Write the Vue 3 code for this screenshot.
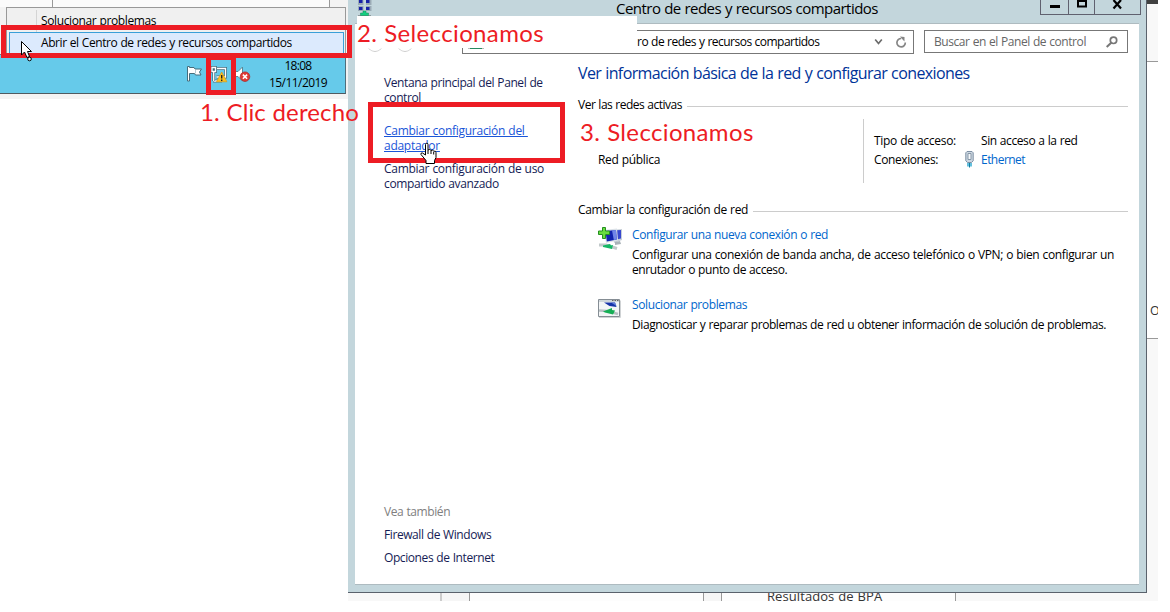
<script setup>
const seeAlso = ['Firewall de Windows', 'Opciones de Internet']
</script>

<template>
  <div class="stage">
    <!-- Windows behind the control panel -->
    <div class="behind-right">
      <div class="strip dark"></div>
      <div class="strip head"></div>
      <div class="strip body"><span>O</span></div>
      <div class="strip foot"></div>
    </div>
    <div class="behind-bottom">
      <div class="col c1"></div>
      <div class="col c2"></div>
      <div class="col c3"></div>
      <div class="col c4"></div>
      <div class="col c5"><span>Resultados de BPA</span></div>
      <div class="col c6"></div>
    </div>

    <!-- Taskbar with the network context menu -->
    <section class="tray-shot">
      <div class="tray-top"><i></i><i></i></div>
      <div class="taskbar">
        <svg class="ic-flag" width="18" height="18" viewBox="0 0 18 18">
          <path d="M1.500 1.500h2v1h4.500l1 1.500h6.500l-2 3 1.500 3h-5.500l-1-1.500H3.500v7.500h-2z" fill="#fff" stroke="#456d7c" stroke-linejoin="round" />
          <path d="M9.500 5v3.500" stroke="#b9ccd3" />
        </svg>
        <svg class="ic-net" width="18" height="18" viewBox="0 0 18 18">
          <path d="M7 3.500h8.500v8.500H6.500" fill="none" stroke="#456d7c" stroke-width="2.800" />
          <path d="M3 16h9" fill="none" stroke="#456d7c" stroke-width="2.800" />
          <path d="M7 3.500h8.500v8.500H6.500M3.500 16h8" fill="none" stroke="#fff" stroke-width="1.300" />
          <path d="M2 2.500h3.500v4H2zM3.700 7v9" fill="#456d7c" stroke="#456d7c" stroke-width="2.800" />
          <path d="M2 2.500h3.500v4H2zM3.700 7v9" fill="none" stroke="#fff" stroke-width="1.300" />
          <path d="M11.700 7l5.200 9.800H6.500z" fill="#fcc11e" stroke="#e09a10" stroke-width=".7" />
          <path d="M11.700 10v3.500M11.700 14.500v1.400" stroke="#222" stroke-width="1.400" />
        </svg>
        <svg class="ic-vol" width="17" height="18" viewBox="0 0 17 18">
          <path d="M1 6.500h3l4.500-4.500v14l-4.500-4.500h-3z" fill="#fff" stroke="#5a8796" />
          <circle cx="11" cy="11.700" r="4.800" fill="#e03a34" stroke="#a82a28" stroke-width=".7" />
          <path d="M8.900 9.600l4.200 4.200M13.100 9.600l-4.200 4.200" stroke="#fff" stroke-width="1.600" />
        </svg>
        <div class="clock"><span class="time">18:08</span><span class="date">15/11/2019</span></div>
      </div>
      <div class="menu">
        <div class="menu-item plain">Solucionar problemas</div>
        <div class="menu-item hot">Abrir el Centro de redes y recursos compartidos</div>
      </div>
    </section>

    <!-- Control panel window -->
    <section class="window">
      <header class="titlebar">
        <svg class="win-icon" width="14" height="16" viewBox="0 0 14 16">
          <g fill="#9babb6"><path d="M0 0h5.500v5H0zM8 0h5.500v5H8zM0 6h5.500v5H0zM8 6h5.500v5H8z" /></g>
          <g fill="#1822a8"><path d="M1 0h3.500v3H1zM8 0h3.500v3H8zM1 7h3.500v3H1zM8 7h3.500v3H8z" /></g>
          <path d="M0 15.500h13" stroke="#8c999c" />
          <path d="M5 11h3v2h2.500v2.500h-8V13H5z" fill="#14cf80" stroke="#168a5a" stroke-width=".5" />
        </svg>
        <h1>Centro de redes y recursos compartidos</h1>
        <div class="win-buttons">
          <button class="min"><svg width="27" height="14"><path d="M9 6.500h10" stroke="#000" stroke-width="3" /></svg></button>
          <button class="max"><svg width="25" height="14"><path d="M9 0v6.500h8V0M9 1h8" fill="none" stroke="#000" stroke-width="2" /></svg></button>
          <button class="close"><svg width="45" height="14"><path d="M18.500 0l7.500 8.500M26 0l-7.500 8.500" stroke="#000" stroke-width="2.200" /></svg></button>
        </div>
      </header>

      <div class="client">
        <div class="toolbar">
          <div class="nav"><i></i><i></i></div>
          <div class="address">
            <span class="crumb-icon"></span>
            <span class="crumb">ro de redes y recursos compartidos</span>
            <svg class="chev" width="9" height="8" viewBox="0 0 9 8"><path d="M1.200 1.500l3.300 4 3.300-4" fill="none" stroke="#6b6b6b" stroke-width="1.700" /></svg>
            <svg class="reload" width="12" height="13" viewBox="0 0 12 13"><path d="M10.300 6.500a4.200 4.200 0 1 1-4-4" fill="none" stroke="#858585" stroke-width="1.700" /><path d="M5 .5l4.500.5v4.500L8 4z" fill="#858585" /></svg>
          </div>
          <div class="search">
            <span>Buscar en el Panel de control</span>
            <svg width="12" height="12" viewBox="0 0 12 12"><circle cx="7.500" cy="4.300" r="3.200" fill="none" stroke="#777" stroke-width="1.700" /><path d="M5.200 6.700L.7 11" stroke="#777" stroke-width="2" /></svg>
          </div>
        </div>

        <div class="columns">
          <aside>
            <nav class="tasks">
              <a class="t1">Ventana principal del Panel de<br>control</a>
              <a class="t2">Cambiar configuración del&nbsp;<br>adaptador</a>
              <a class="t3">Cambiar configuración de uso<br><span>compartido avanzado</span></a>
            </nav>
            <div class="see-also">
              <p>Vea también</p>
              <a v-for="s in seeAlso" :key="s">{{ s }}</a>
            </div>
          </aside>

          <main>
            <h2>Ver información básica de la red y configurar conexiones</h2>
            <div class="legend active"><span>Ver las redes activas</span><hr></div>
            <div class="network">
              <div class="net-name">Red pública</div>
              <div class="net-info">
                <span class="k1">Tipo de acceso:</span><span class="v1">Sin acceso a la red</span>
                <span class="k2">Conexiones:</span>
                <span class="eth">
                  <svg width="9" height="17" viewBox="0 0 9 17">
                    <path d="M.8 1.800l1.200-1.300h5l1.200 1.300v8L6.500 11.500h-4L.8 9.800z" fill="#ccd7e1" stroke="#7e90a4" />
                    <path d="M3 2.500h3v6H3z" fill="#f5f8fa" stroke="#8797a8" />
                    <path d="M3 12v3.500M6 12v3.500" stroke="#22a5cf" stroke-width="1.400" /><path d="M4.500 12v4.500" stroke="#127ba0" />
                  </svg>
                  <a>Ethernet</a>
                </span>
              </div>
            </div>
            <div class="legend change"><span>Cambiar la configuración de red</span><hr></div>
            <article class="new-conn">
              <svg width="26" height="26" viewBox="0 0 26 26">
                <path d="M14 4l10-1v11l-8 3z" fill="#c7cfd8" />
                <path d="M15 4.500l8-.5v8.500l-7 1.500z" fill="#3848cf" />
                <path d="M6 4l13-1.500 1 12L8 17z" fill="#dce2e8" />
                <path d="M7.500 5l10.500-1 .8 9.500-10 2z" fill="#1224ae" />
                <path d="M14 4.300l4-.3.800 9.500-3 .6z" fill="#7186e8" />
                <path d="M17 16l5-1 1 3-6 1z" fill="#a9b2b8" />
                <path d="M1 19l7 0 11 3.500" fill="none" stroke="#c0c8c9" stroke-width="3" />
                <path d="M5 19.500l7-1.500 1 1.500 2-.5-1 4-9-2z" fill="#16b766" />
                <path d="M4.500 1.500h3v3.500h4v3.500h-4v4h-3v-4h-4V5h4z" fill="#68dc3e" stroke="#248f21" />
              </svg>
              <div>
                <a class="l1">Configurar una nueva conexión o red</a>
                <p><span class="d1">Configurar una conexión de banda ancha, de acceso telefónico o VPN; o bien configurar un</span><br>enrutador o punto de acceso.</p>
              </div>
            </article>
            <article class="fix">
              <svg width="26" height="22" viewBox="0 0 26 22">
                <path d="M.5 1.500h21v17H.5z" fill="#f3f5f6" stroke="#858d94" />
                <path d="M1 19.500h21.500v-17" fill="none" stroke="#d0d3d5" />
                <path d="M1 2h20v2H1z" fill="#cfd6db" />
                <path d="M14 2.500h1.500m1 0H18m1 0h1.500" stroke="#666" />
                <path d="M6 4.500h11l1.500 4.500-7-1z" fill="#1733a8" />
                <path d="M13 4.500h4l1.500 3.500z" fill="#6581dc" />
                <path d="M1 12.500l8 .500 11 3" fill="none" stroke="#b6bfc2" stroke-width="2.500" />
                <path d="M5 13.500l9-3.500v2l3 .5-2 4-8-2z" fill="#16ae55" />
              </svg>
              <div>
                <a class="l2">Solucionar problemas</a>
                <p class="d2">Diagnosticar y reparar problemas de red u obtener información de solución de problemas.</p>
              </div>
            </article>
          </main>
        </div>
      </div>
    </section>

    <!-- Tutorial annotations -->
    <div class="cover"></div>
    <div class="mark m-menu"></div>
    <div class="mark m-tray"></div>
    <div class="mark m-task"></div>
    <div class="note n1">1. Clic derecho</div>
    <div class="note n2">2. Seleccionamos</div>
    <div class="note n3">3. Sleccionamos</div>

    <svg class="cursor arrow" width="15" height="23" viewBox="0 0 15 23">
      <path d="M1.500 1.500v13.500l3-3 2.500 5.500 2.500-1-2-5h4z" fill="#fff" stroke="#000" />
      <circle cx="9.500" cy="19" r="1.800" fill="#fff" stroke="#000" />
    </svg>
    <svg class="cursor hand" width="18" height="23" viewBox="0 0 18 23">
      <path d="M5.500 13V2.500a1.200 1.200 0 0 1 2.500 0V8q2-1.500 3 .5 2-1 2.800.7 2.200-.5 2.200 1.300v5l-1.500 3v3h-8.500v-3L1 12.500q-.5-2 1.500-1.500z" fill="#fff" stroke="#000" />
      <path d="M8 8v4M11 9v3M13.700 10v2.500" stroke="#000" />
    </svg>
  </div>
</template>

<style>
body { background: #fff; }
</style>

<style scoped>
.stage { position: relative; width: 1170px; height: 612px; overflow: hidden; background: #fff; color: #000; font: 12px/15px "Open Sans", "Noto Sans", sans-serif; letter-spacing: -.41px; word-spacing: .4px; white-space: nowrap; }
h1, h2, p { margin: 0; font-weight: 400; }
svg { display: block; flex: none; }

.behind-right { position: absolute; left: 1147px; top: 0; width: 11px; height: 601px; display: flex; flex-direction: column; overflow: hidden; }
.strip { box-sizing: border-box; flex: none; }
.dark { height: 4px; background: #404040; }
.head { height: 58px; background: #f8f8f8; border-bottom: 1px solid #999; }
.body { height: 277px; border-bottom: 1px solid #999; background: #fff; padding: 241px 0 0 3px; color: #333; font-size: 12.5px; }
.foot { flex: 1; background: #f8f8f8; }

.behind-bottom { position: absolute; left: 348px; top: 593px; width: 799px; height: 8px; display: flex; overflow: hidden; background: #f8f8f8; }
.col { box-sizing: border-box; flex: none; }
.c1 { width: 94px; border-right: 2px solid #ccc; }
.c2 { width: 28px; border-right: 1px solid #999; background: #f6f6f6; }
.c3 { width: 234px; border-right: 1px solid #999; background: #fdfdfd; }
.c4 { width: 18px; border-right: 1px solid #999; background: #f6f6f6; }
.c5 { width: 234px; border-right: 1px solid #999; background: #fdfdfd; padding-left: 45px; color: #333; font-size: 13px; letter-spacing: .08px; }
.c5 span { display: block; margin-top: -5px; line-height: 17px; }
.c6 { flex: 1; }

.tray-shot { position: absolute; left: 0; top: 0; width: 348px; height: 99px; background: #f3f3f3; }
.tray-top { height: 7px; width: 330px; display: flex; justify-content: space-between; background: #fbfbfb; }
.tray-top i { border-right: 1px solid #999; }
.tray-top i:first-child { width: 52px; }
.taskbar { position: absolute; left: 0; top: 54px; width: 345px; height: 39px; background: #66caea; border-right: 1px solid #4f6f7c; border-bottom: 1px solid #4f5a60; display: flex; }
.taskbar::before { content: ""; width: 6px; height: 1px; background: #777; }
.ic-flag { margin: 11px 0 0 180px; }
.ic-net { margin: 11px 0 0 6px; }
.ic-vol { margin: 11px 0 0 6px; }
.clock { margin: 3px 18px 0 auto; width: 58px; text-align: center; line-height: 17px; }
.clock span { display: block; }
.time { letter-spacing: -.7px; }
.date { letter-spacing: -.56px; }
.menu { position: absolute; left: 6px; top: 7px; width: 338px; height: 47px; border: solid #999; border-width: 1px 1px 0; background: linear-gradient(#d4d4d4, #d4d4d4) 29px 2px / 1px 30px no-repeat #f0f0f0; }
.menu-item { box-sizing: border-box; padding-left: 34px; }
.plain { height: 24px; padding-top: 5px; letter-spacing: -.38px; }
.hot { height: 23px; margin: 0 1px 0 2px; padding: 2px 0 0 31px; border: 1px solid #3a9fd8; border-bottom: 0; background: #dceafd; letter-spacing: -.42px; }

.window { position: absolute; left: 348px; top: 0; box-sizing: border-box; width: 799px; height: 593px; padding: 0 7px 7px; background: #c3d6dc; border: solid #5a626c; border-width: 0 1px 1px 0; display: flex; flex-direction: column; }
.titlebar { height: 23px; display: flex; align-items: flex-start; position: relative; justify-content: center; }
.win-icon { position: absolute; left: 3px; top: 0; }
h1 { font-size: 15px; line-height: 16px; letter-spacing: -.53px; }
.win-buttons { position: absolute; right: -2px; top: 0; display: flex; }
button { all: unset; box-sizing: border-box; height: 15px; border: solid #60616f; border-width: 0 0 1px 1px; }
.min { width: 28px; }
.max { width: 26px; }
.close { width: 47px; border-right-width: 1px; }
.client { flex: 1; background: #fff; border-top: 1px solid #aebbc0; border-bottom: 1px solid #aebbc0; }
.toolbar { display: flex; padding: 6px 11px 0 0; height: 24px; }
.nav { width: 107px; display: flex; gap: 14px; padding-left: 12px; box-sizing: border-box; }
.nav i { width: 16px; height: 16px; margin-top: 5px; border-bottom: 1px solid #ccc; border-radius: 50%; }
.address { box-sizing: border-box; width: 452px; height: 24px; border: 1px solid #777; display: flex; align-items: center; padding-right: 6px; }
.crumb-icon { align-self: flex-end; width: 12px; height: 1px; margin: 0 0 4px 5px; background: #258a62; border: solid #bbb; border-width: 0 2px; }
.crumb { margin: -1px 0 0 153px; letter-spacing: -.52px; }
.chev { margin-left: auto; }
.reload { margin-left: 12px; }
.search { box-sizing: border-box; width: 204px; height: 23px; margin-left: 10px; border: 1px solid #777; display: flex; align-items: center; justify-content: space-between; padding: 0 9px; color: #666; letter-spacing: -.43px; }

.columns { display: flex; height: 530px; }
aside { width: 223px; box-sizing: border-box; padding: 21px 0 0 29px; display: flex; flex-direction: column; color: #151c55; }
.tasks { display: flex; flex-direction: column; }
.t2 { margin-top: 18px; color: #1a55d8; text-decoration: underline; letter-spacing: -.28px; }
.t3 { margin-top: 8px; letter-spacing: -.3px; }
.t3 span { letter-spacing: -.37px; }
.see-also { margin-top: 313px; display: flex; flex-direction: column; gap: 8px; }
.see-also p { color: #808080; }
main { flex: 1; padding: 8px 11px 0 0; }
h2 { font-size: 16px; line-height: 22px; letter-spacing: -.6px; color: #003399; }
.legend { display: flex; align-items: center; }
.legend hr { flex: 1; height: 1px; margin: 3px 0 0 5px; border: 0; background: #ccc; }
.active { margin-top: 13px; letter-spacing: -.49px; }
.network { display: flex; height: 64px; margin-top: 7px; }
.net-name { box-sizing: border-box; width: 285px; padding: 33px 0 0 20px; letter-spacing: -.32px; }
.net-info { flex: 1; border-left: 1px solid #ccc; padding: 14px 0 0 10px; display: grid; grid-template-columns: 90px 1fr; grid-auto-rows: 19px; }
.k1 { letter-spacing: -.29px; }
.k2 { letter-spacing: -.4px; }
.v1, .eth a { margin-left: 17px; }
.eth { position: relative; color: #0066cc; letter-spacing: -.54px; }
.eth svg { position: absolute; left: 1px; top: -1px; }
.change { margin-top: 19px; letter-spacing: -.33px; }
article { display: flex; margin-left: 20px; }
article div { margin-left: 8px; }
article a { display: block; color: #0066cc; }
article p { margin-top: 5px; }
.new-conn { margin-top: 10px; }
.new-conn > svg { margin-top: -1px; }
.l1 { letter-spacing: -.395px; }
.l2 { letter-spacing: -.385px; }
.d1 { letter-spacing: -.35px; }
.fix { margin-top: 20px; }
.fix > svg { margin-top: 1px; }
.d2 { letter-spacing: -.425px; }

.cover { position: absolute; left: 357px; top: 16px; width: 280px; height: 32px; background: #fff; }
.mark { position: absolute; box-sizing: border-box; border: 5px solid #ed1c24; }
.m-menu { left: 1px; top: 25px; width: 351px; height: 33px; }
.m-tray { left: 206px; top: 55px; width: 30px; height: 40px; }
.m-task { left: 368px; top: 102px; width: 197px; height: 61px; }
.note { position: absolute; color: #ed1c24; font: 24px/30px Lato, sans-serif; }
.n1 { left: 200px; top: 97px; letter-spacing: .12px; }
.n2 { left: 357px; top: 18px; letter-spacing: .36px; }
.n3 { left: 580px; top: 117px; letter-spacing: .35px; }
.cursor { position: absolute; }
.arrow { left: 20px; top: 40px; }
.hand { left: 420px; top: 142px; }
</style>
